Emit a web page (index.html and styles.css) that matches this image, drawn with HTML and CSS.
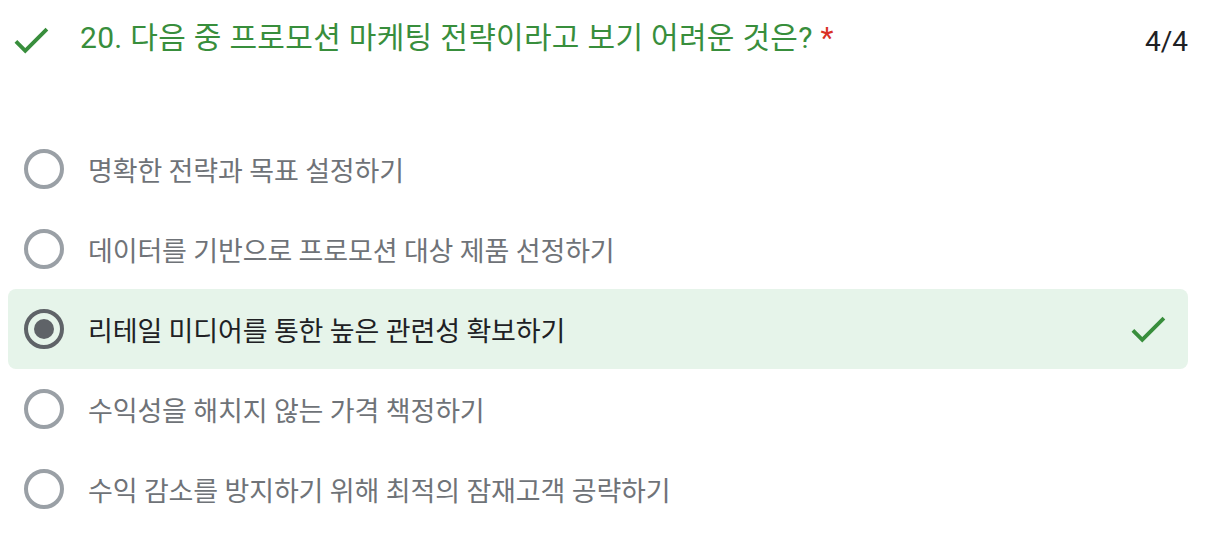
FILE: index.html
```html
<!DOCTYPE html>
<html lang="ko">
  <head>
    <meta charset="UTF-8" />
    <meta name="viewport" content="width=device-width, initial-scale=1.0"/>
    <title>퀴즈 결과</title>
    <link rel="stylesheet" href="styles.css">
  </head>

  <body>
    <div class="question">
      <div class="question-header">
        <svg class="icon-check" viewBox="0 0 24 24"><path d="M9 16.17L4.83 12l-1.42 1.41L9 19 21 7l-1.41-1.41z"/></svg>
        <div class="question-title">20. 다음 중 프로모션 마케팅 전략이라고 보기 어려운 것은? <span class="required">*</span></div>
        <div class="score">4/4</div>
      </div>

      <div class="options">
        <div class="option">
          <span class="radio"></span>
          <span class="option-label">명확한 전략과 목표 설정하기</span>
        </div>
        <div class="option">
          <span class="radio"></span>
          <span class="option-label">데이터를 기반으로 프로모션 대상 제품 선정하기</span>
        </div>
        <div class="option selected">
          <span class="radio"></span>
          <span class="option-label">리테일 미디어를 통한 높은 관련성 확보하기</span>
          <svg class="icon-check" viewBox="0 0 24 24"><path d="M9 16.17L4.83 12l-1.42 1.41L9 19 21 7l-1.41-1.41z"/></svg>
        </div>
        <div class="option">
          <span class="radio"></span>
          <span class="option-label">수익성을 해치지 않는 가격 책정하기</span>
        </div>
        <div class="option">
          <span class="radio"></span>
          <span class="option-label">수익 감소를 방지하기 위해 최적의 잠재고객 공략하기</span>
        </div>
      </div>
    </div>
  </body>
</html>
```

FILE: styles.css
```css
body {
  margin: 0;
  background-color: #fff;
  font-family: Roboto, "Noto Sans CJK KR", sans-serif;
  color: #202124;
}

.question {
  width: 1180px;
  padding-left: 8px;
}

.question-header {
  display: flex;
  align-items: flex-start;
  height: 129px;
}

.icon-check {
  width: 46px;
  height: 46px;
  fill: #388e3c;
  flex-shrink: 0;
}

.question-header .icon-check {
  margin-top: 17px;
}

.question-title {
  flex: 1;
  margin-left: 26px;
  margin-top: 18px;
  font-size: 30px;
  line-height: 40px;
  letter-spacing: 0.3px;
  color: #388e3c;
}

.required {
  color: #d93025;
}

.score {
  margin-top: 22px;
  font-size: 28px;
  line-height: 40px;
  color: #202124;
}

.option {
  display: flex;
  align-items: center;
  height: 80px;
  padding-left: 16px;
  padding-right: 17px;
  border-radius: 8px;
}

.option.selected {
  background-color: #e6f4ea;
}

.radio {
  width: 32px;
  height: 32px;
  border: 4px solid #9aa0a6;
  border-radius: 50%;
  flex-shrink: 0;
  display: flex;
  align-items: center;
  justify-content: center;
}

.selected .radio {
  border-color: #5f6368;
}

.selected .radio::after {
  content: "";
  width: 20px;
  height: 20px;
  border-radius: 50%;
  background-color: #5f6368;
}

.option-label {
  flex: 1;
  margin-left: 24px;
  font-size: 27px;
  letter-spacing: -0.15px;
  color: #6f7378;
}

.selected .option-label {
  color: #202124;
}
```
